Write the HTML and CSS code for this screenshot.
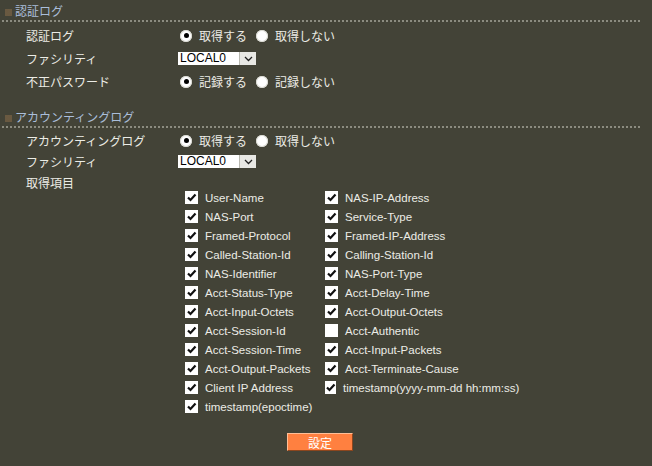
FILE: index.html
```html
<!DOCTYPE html>
<html lang="ja">

<head>
  <meta charset="UTF-8">
  <title>ログ設定</title>
  <link rel="stylesheet" href="styles.css">
</head>

<body>
  <div id="page">

    <!-- 認証ログ -->
    <h2 class="section-title"><span class="section-icon"></span>認証ログ</h2>
    <div class="form auth">
      <div class="label">認証ログ</div>
      <div class="field">
        <label class="radio"><span class="radio-mark on"></span>取得する</label>
        <label class="radio"><span class="radio-mark"></span>取得しない</label>
      </div>

      <div class="label">ファシリティ</div>
      <div class="field">
        <div class="select"><span class="select-value">LOCAL0</span><span class="select-btn">
            <svg width="9" height="6" viewBox="0 0 9 6"><path d="M1 1l3.5 3.5L8 1" fill="none" stroke="#202020" stroke-width="1.3" /></svg>
          </span></div>
      </div>

      <div class="label">不正パスワード</div>
      <div class="field">
        <label class="radio"><span class="radio-mark on"></span>記録する</label>
        <label class="radio"><span class="radio-mark"></span>記録しない</label>
      </div>
    </div>

    <!-- アカウンティングログ -->
    <h2 class="section-title second"><span class="section-icon"></span>アカウンティングログ</h2>
    <div class="form acct">
      <div class="label">アカウンティングログ</div>
      <div class="field">
        <label class="radio"><span class="radio-mark on"></span>取得する</label>
        <label class="radio"><span class="radio-mark"></span>取得しない</label>
      </div>

      <div class="label">ファシリティ</div>
      <div class="field">
        <div class="select"><span class="select-value">LOCAL0</span><span class="select-btn">
            <svg width="9" height="6" viewBox="0 0 9 6"><path d="M1 1l3.5 3.5L8 1" fill="none" stroke="#202020" stroke-width="1.3" /></svg>
          </span></div>
      </div>

      <div class="label">取得項目</div>
      <div class="field"></div>
    </div>

    <div class="items" id="items"></div>

    <div class="actions">
      <button class="submit">設定</button>
    </div>

  </div>

  <script>
    // attribute list, two columns (left, right)
    const items = [
      ["User-Name", true], ["NAS-IP-Address", true],
      ["NAS-Port", true], ["Service-Type", true],
      ["Framed-Protocol", true], ["Framed-IP-Address", true],
      ["Called-Station-Id", true], ["Calling-Station-Id", true],
      ["NAS-Identifier", true], ["NAS-Port-Type", true],
      ["Acct-Status-Type", true], ["Acct-Delay-Time", true],
      ["Acct-Input-Octets", true], ["Acct-Output-Octets", true],
      ["Acct-Session-Id", true], ["Acct-Authentic", false],
      ["Acct-Session-Time", true], ["Acct-Input-Packets", true],
      ["Acct-Output-Packets", true], ["Acct-Terminate-Cause", true],
      ["Client IP Address", true], ["timestamp(yyyy-mm-dd hh:mm:ss)", true],
      ["timestamp(epoctime)", true]
    ];

    const check = '<svg width="11" height="11" viewBox="0 0 11 11"><path d="M2 5.5l2.5 2.5L9.5 2.5" fill="none" stroke="#111" stroke-width="2.2" /></svg>';
    let list = document.getElementById("items");
    for (const [name, on] of items) {
      let row = document.createElement("label");
      row.className = "item";
      row.innerHTML = `<span class="box">${on ? check : ""}</span>${name}`;
      list.appendChild(row);
    }
  </script>
</body>

</html>
```

FILE: styles.css
```css
:root {
  --background-colour: rgb(67, 67, 55);
  --text-colour: rgb(236, 236, 230);
  --title-colour: rgb(170, 190, 218);
  --dot-colour: rgb(140, 140, 128);
  --font-family: "Liberation Sans", "Noto Sans CJK JP", sans-serif;
}

html,
body {
  margin: 0;
  padding: 0;
  background-color: var(--background-colour);
  color: var(--text-colour);
  font-family: var(--font-family);
  font-size: 12px;
}

#page {
  width: 640px;
  padding-top: 3px;
}

.section-title {
  display: flex;
  align-items: center;
  margin: 0 0 0 2px;
  padding: 0 0 2px 3px;
  height: 15px;
  font-size: 12px;
  font-weight: normal;
  color: var(--title-colour);
  border-bottom: 2px dotted var(--dot-colour);
}

.section-title.second {
  margin-top: 16px;
}

.section-icon {
  width: 7px;
  height: 7px;
  margin-right: 3px;
  margin-top: 3px;
  background-image: radial-gradient(rgb(150, 115, 75) 0.6px, transparent 0.8px);
  background-size: 2px 2px;
}

.form {
  display: grid;
  grid-template-columns: 152px 1fr;
  padding-left: 26px;
}

.form.auth {
  margin-top: 2px;
  grid-auto-rows: 23px;
}

.form.acct {
  margin-top: 2px;
  grid-auto-rows: 21px;
}

.label,
.field {
  display: flex;
  align-items: center;
}

.radio {
  display: inline-flex;
  align-items: center;
  margin-left: 2px;
  margin-right: 7px;
}

.radio-mark {
  width: 12px;
  height: 12px;
  border-radius: 50%;
  background-color: #fff;
  box-shadow: inset 0 0 0 1px #d8d8d0;
  margin-right: 7px;
  display: inline-flex;
  align-items: center;
  justify-content: center;
}

.radio-mark.on::after {
  content: "";
  width: 5px;
  height: 5px;
  border-radius: 50%;
  background-color: #000;
}

.select {
  display: flex;
  width: 78px;
  height: 13px;
  background-color: #fff;
  color: #000;
  font-size: 12px;
  line-height: 13px;
}

.select-value {
  flex: 1;
  padding-left: 2px;
}

.select-btn {
  width: 16px;
  display: flex;
  align-items: center;
  justify-content: center;
  background-color: #e8e8e4;
  border-left: 1px solid #b8b8b0;
}

.items {
  display: grid;
  grid-template-columns: 140px 190px;
  grid-auto-rows: 19px;
  padding-left: 185px;
  margin-top: -5px;
}

.item {
  display: flex;
  align-items: center;
  white-space: nowrap;
  font-size: 11.5px;
}

.box {
  width: 13px;
  height: 13px;
  margin-right: 7px;
  background-color: #fff;
  display: inline-flex;
  align-items: center;
  justify-content: center;
}

.actions {
  display: flex;
  justify-content: center;
  margin-top: 17px;
}

.submit {
  width: 66px;
  height: 18px;
  padding: 0;
  background-color: rgb(255, 128, 64);
  color: #fff;
  font-family: var(--font-family);
  font-size: 12px;
  border: 1px solid;
  border-color: rgb(255, 190, 150) rgb(140, 70, 30) rgb(140, 70, 30) rgb(255, 190, 150);
}
```
